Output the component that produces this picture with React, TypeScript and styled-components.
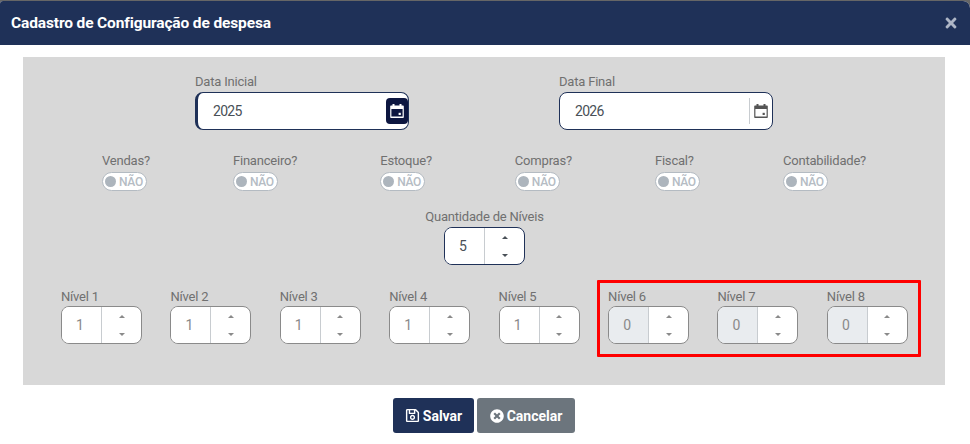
import styled, { createGlobalStyle } from 'styled-components';
import { FaRegSave, FaTimes, FaTimesCircle } from 'react-icons/fa';

const navy = '#1f3158';

const GlobalStyle = createGlobalStyle`
    html, body {
        margin: 0;
        padding: 0;
        background: #fff;
        font-family: Roboto, "Liberation Sans", sans-serif;
    }
`;

const modules = ['Vendas?', 'Financeiro?', 'Estoque?', 'Compras?', 'Fiscal?', 'Contabilidade?'];

function CalendarIcon() {
	return (
		<svg width="14" height="14" viewBox="0 0 14 14" fill="currentColor">
			<rect x="2.5" y="0" width="2" height="2" />
			<rect x="9.5" y="0" width="2" height="2" />
			<path fillRule="evenodd" d="M1 1.5h12a.8.8 0 0 1 .8.8v10.9a.8.8 0 0 1-.8.8H1a.8.8 0 0 1-.8-.8V2.3a.8.8 0 0 1 .8-.8zM1.4 5v7.6h11.2V5z" />
			<rect x="8.6" y="8.8" width="2.2" height="2.2" />
		</svg>
	);
}

function Toggle() {
	return (
		<ToggleBox>
			<Knob />
			<span>NÃO</span>
		</ToggleBox>
	);
}

function Spinner({label, value, disabled}: {label: string, value: number, disabled?: boolean}) {
	return (
		<Field>
			<LevelLabel>{label}</LevelLabel>
			<SpinnerBox>
				<SpinnerValue $disabled={disabled}>{value}</SpinnerValue>
				<SpinnerArrows>
					<ArrowUp />
					<ArrowDown />
				</SpinnerArrows>
			</SpinnerBox>
		</Field>
	);
}

export default function App() {
	return (
		<Page>
			<GlobalStyle />
			<Modal>
				<Header>
					<Title>Cadastro de Configuração de despesa</Title>
					<CloseIcon size={16} />
				</Header>
				<Panel>
					<DatesRow>
						<Field>
							<Label>Data Inicial</Label>
							<DateBox $focused>
								<DateValue>2025</DateValue>
								<CalendarActive><CalendarIcon /></CalendarActive>
							</DateBox>
						</Field>
						<Field>
							<Label>Data Final</Label>
							<DateBox>
								<DateValue>2026</DateValue>
								<CalendarPlain><CalendarIcon /></CalendarPlain>
							</DateBox>
						</Field>
					</DatesRow>
					<TogglesRow>
						{modules.map(m => (
							<Field key={m}>
								<Label>{m}</Label>
								<Toggle />
							</Field>
						))}
					</TogglesRow>
					<QuantityRow>
						<QuantityField>
							<Label>Quantidade de Níveis</Label>
							<SpinnerBox $active>
								<SpinnerValue $active>5</SpinnerValue>
								<SpinnerArrows>
									<ArrowUp $dark />
									<ArrowDown $dark />
								</SpinnerArrows>
							</SpinnerBox>
						</QuantityField>
					</QuantityRow>
					<LevelsRow>
						<LevelList>
							{[1, 2, 3, 4, 5].map(n => <Spinner key={n} label={`Nível ${n}`} value={1} />)}
						</LevelList>
						<Highlight>
							<LevelList>
								{[6, 7, 8].map(n => <Spinner key={n} label={`Nível ${n}`} value={0} disabled />)}
							</LevelList>
						</Highlight>
					</LevelsRow>
				</Panel>
				<Footer>
					<SaveButton><FaRegSave size={15} />Salvar</SaveButton>
					<CancelButton><FaTimesCircle size={14} />Cancelar</CancelButton>
				</Footer>
			</Modal>
		</Page>
	);
}

const Page = styled.div`
    width: 970px;
    height: 444px;
    overflow: hidden;
    background: #666;
    padding-top: 1px;
    box-sizing: border-box;
`;

const Modal = styled.div`
    width: 970px;
    height: 443px;
    background: #fff;
    border-radius: 3px 7px 0 0;
    display: flex;
    flex-direction: column;
`;

const Header = styled.div`
    height: 44px;
    flex: none;
    background: ${navy};
    border-radius: 3px 7px 0 0;
    display: flex;
    align-items: center;
    justify-content: space-between;
    padding: 0 11.5px 0 11px;
`;

const Title = styled.div`
    color: #fff;
    font-size: 15.5px;
    font-weight: 700;
    letter-spacing: -0.13px;
`;

const CloseIcon = styled(FaTimes)`
    color: #aeb6c6;
`;

const Panel = styled.div`
    margin: 12px 23px 0;
    width: 922px;
    box-sizing: border-box;
    background: #d8d8d8;
    padding: 15px 0 28px;
`;

const Field = styled.div`
    display: flex;
    flex-direction: column;
    align-items: flex-start;
`;

const Label = styled.label`
    height: 20px;
    line-height: 20px;
    font-size: 13px;
    letter-spacing: -0.2px;
    color: #707070;
    white-space: nowrap;
`;

const LevelLabel = styled(Label)`
    line-height: 22px;
`;

const DatesRow = styled.div`
    display: flex;
    justify-content: center;
    gap: 150px;
`;

const DateBox = styled.div<{$focused?: boolean}>`
    width: 214px;
    height: 38px;
    box-sizing: border-box;
    background: #fff;
    border: 1px solid ${navy};
    border-left-width: ${p => (p.$focused ? '3px' : '1px')};
    border-radius: 8px;
    display: flex;
    align-items: center;
    justify-content: space-between;
    padding-left: 15px;
`;

const DateValue = styled.span`
    font-size: 14px;
    letter-spacing: -0.7px;
    color: #495057;
`;

const CalendarActive = styled.span`
    width: 22px;
    height: 26px;
    background: #0d1640;
    color: #fff;
    border-radius: 4px;
    display: flex;
    align-items: center;
    justify-content: center;
`;

const CalendarPlain = styled.span`
    width: 22px;
    height: 26px;
    border-left: 1px solid #c8ccd0;
    color: #555;
    display: flex;
    align-items: center;
    justify-content: center;
`;

const TogglesRow = styled.div`
    display: flex;
    gap: 83px;
    padding-left: 79px;
    margin-top: 21px;
`;

const ToggleBox = styled.div`
    width: 45px;
    height: 19px;
    margin-top: 1px;
    box-sizing: border-box;
    background: #fff;
    border: 1px solid #b4bbc2;
    border-radius: 10px;
    display: flex;
    align-items: center;
    gap: 3px;
    padding-left: 2px;
    font-size: 12px;
    letter-spacing: -0.3px;
    font-weight: 500;
    color: #b5bcc4;
`;

const Knob = styled.span`
    width: 11px;
    height: 11px;
    flex: none;
    border-radius: 50%;
    background: #adb5bd;
`;

const QuantityRow = styled.div`
    display: flex;
    justify-content: center;
    margin-top: 16px;
`;

const QuantityField = styled(Field)`
    align-items: center;
    margin-left: 1px;
`;

const SpinnerBox = styled.div<{$active?: boolean}>`
    width: 81px;
    height: 38px;
    box-sizing: border-box;
    background: #fff;
    border: 1px solid ${p => (p.$active ? navy : '#8a8a8a')};
    border-radius: 8px;
    overflow: hidden;
    display: flex;
`;

const SpinnerValue = styled.div<{$active?: boolean, $disabled?: boolean}>`
    width: 40px;
    flex: none;
    box-sizing: border-box;
    background: ${p => (p.$disabled ? '#e9ecef' : '#fff')};
    border-right: 1px solid #c8ccd0;
    display: flex;
    align-items: center;
    justify-content: center;
    padding-right: 3px;
    font-size: 14px;
    color: ${p => (p.$active ? '#495057' : '#8a8a8a')};
`;

const SpinnerArrows = styled.div`
    flex: 1;
    display: flex;
    flex-direction: column;
    align-items: center;
    justify-content: space-between;
    padding: 8px 0 7px;
`;

const ArrowUp = styled.span<{$dark?: boolean}>`
    width: 0;
    height: 0;
    border-left: 3.5px solid transparent;
    border-right: 3.5px solid transparent;
    border-bottom: 3.5px solid ${p => (p.$dark ? '#495057' : '#8a8a8a')};
`;

const ArrowDown = styled.span<{$dark?: boolean}>`
    width: 0;
    height: 0;
    border-left: 3.5px solid transparent;
    border-right: 3.5px solid transparent;
    border-top: 3.5px solid ${p => (p.$dark ? '#495057' : '#8a8a8a')};
`;

const LevelsRow = styled.div`
    display: flex;
    align-items: flex-start;
    gap: 17.5px;
    padding-left: 38px;
    margin-top: 15px;
`;

const LevelList = styled.div`
    display: flex;
    gap: 28.4px;
    padding-top: 6px;
`;

const Highlight = styled.div`
    border: 3px solid #f00;
    border-radius: 1px;
    padding: 0 10px 10px 8px;
    > div {
        padding-top: 3px;
    }
`;

const Footer = styled.div`
    display: flex;
    justify-content: center;
    gap: 3px;
    margin-top: 13px;
    padding-right: 2px;
`;

const SaveButton = styled.button`
    height: 35px;
    width: 81px;
    border: 0;
    border-radius: 3px;
    background: ${navy};
    color: #fff;
    font: 700 14px Roboto, "Liberation Sans", sans-serif;
    display: flex;
    align-items: center;
    justify-content: center;
    gap: 3px;
    padding: 0;
`;

const CancelButton = styled(SaveButton)`
    width: 98px;
    background: #6c757d;
`;
